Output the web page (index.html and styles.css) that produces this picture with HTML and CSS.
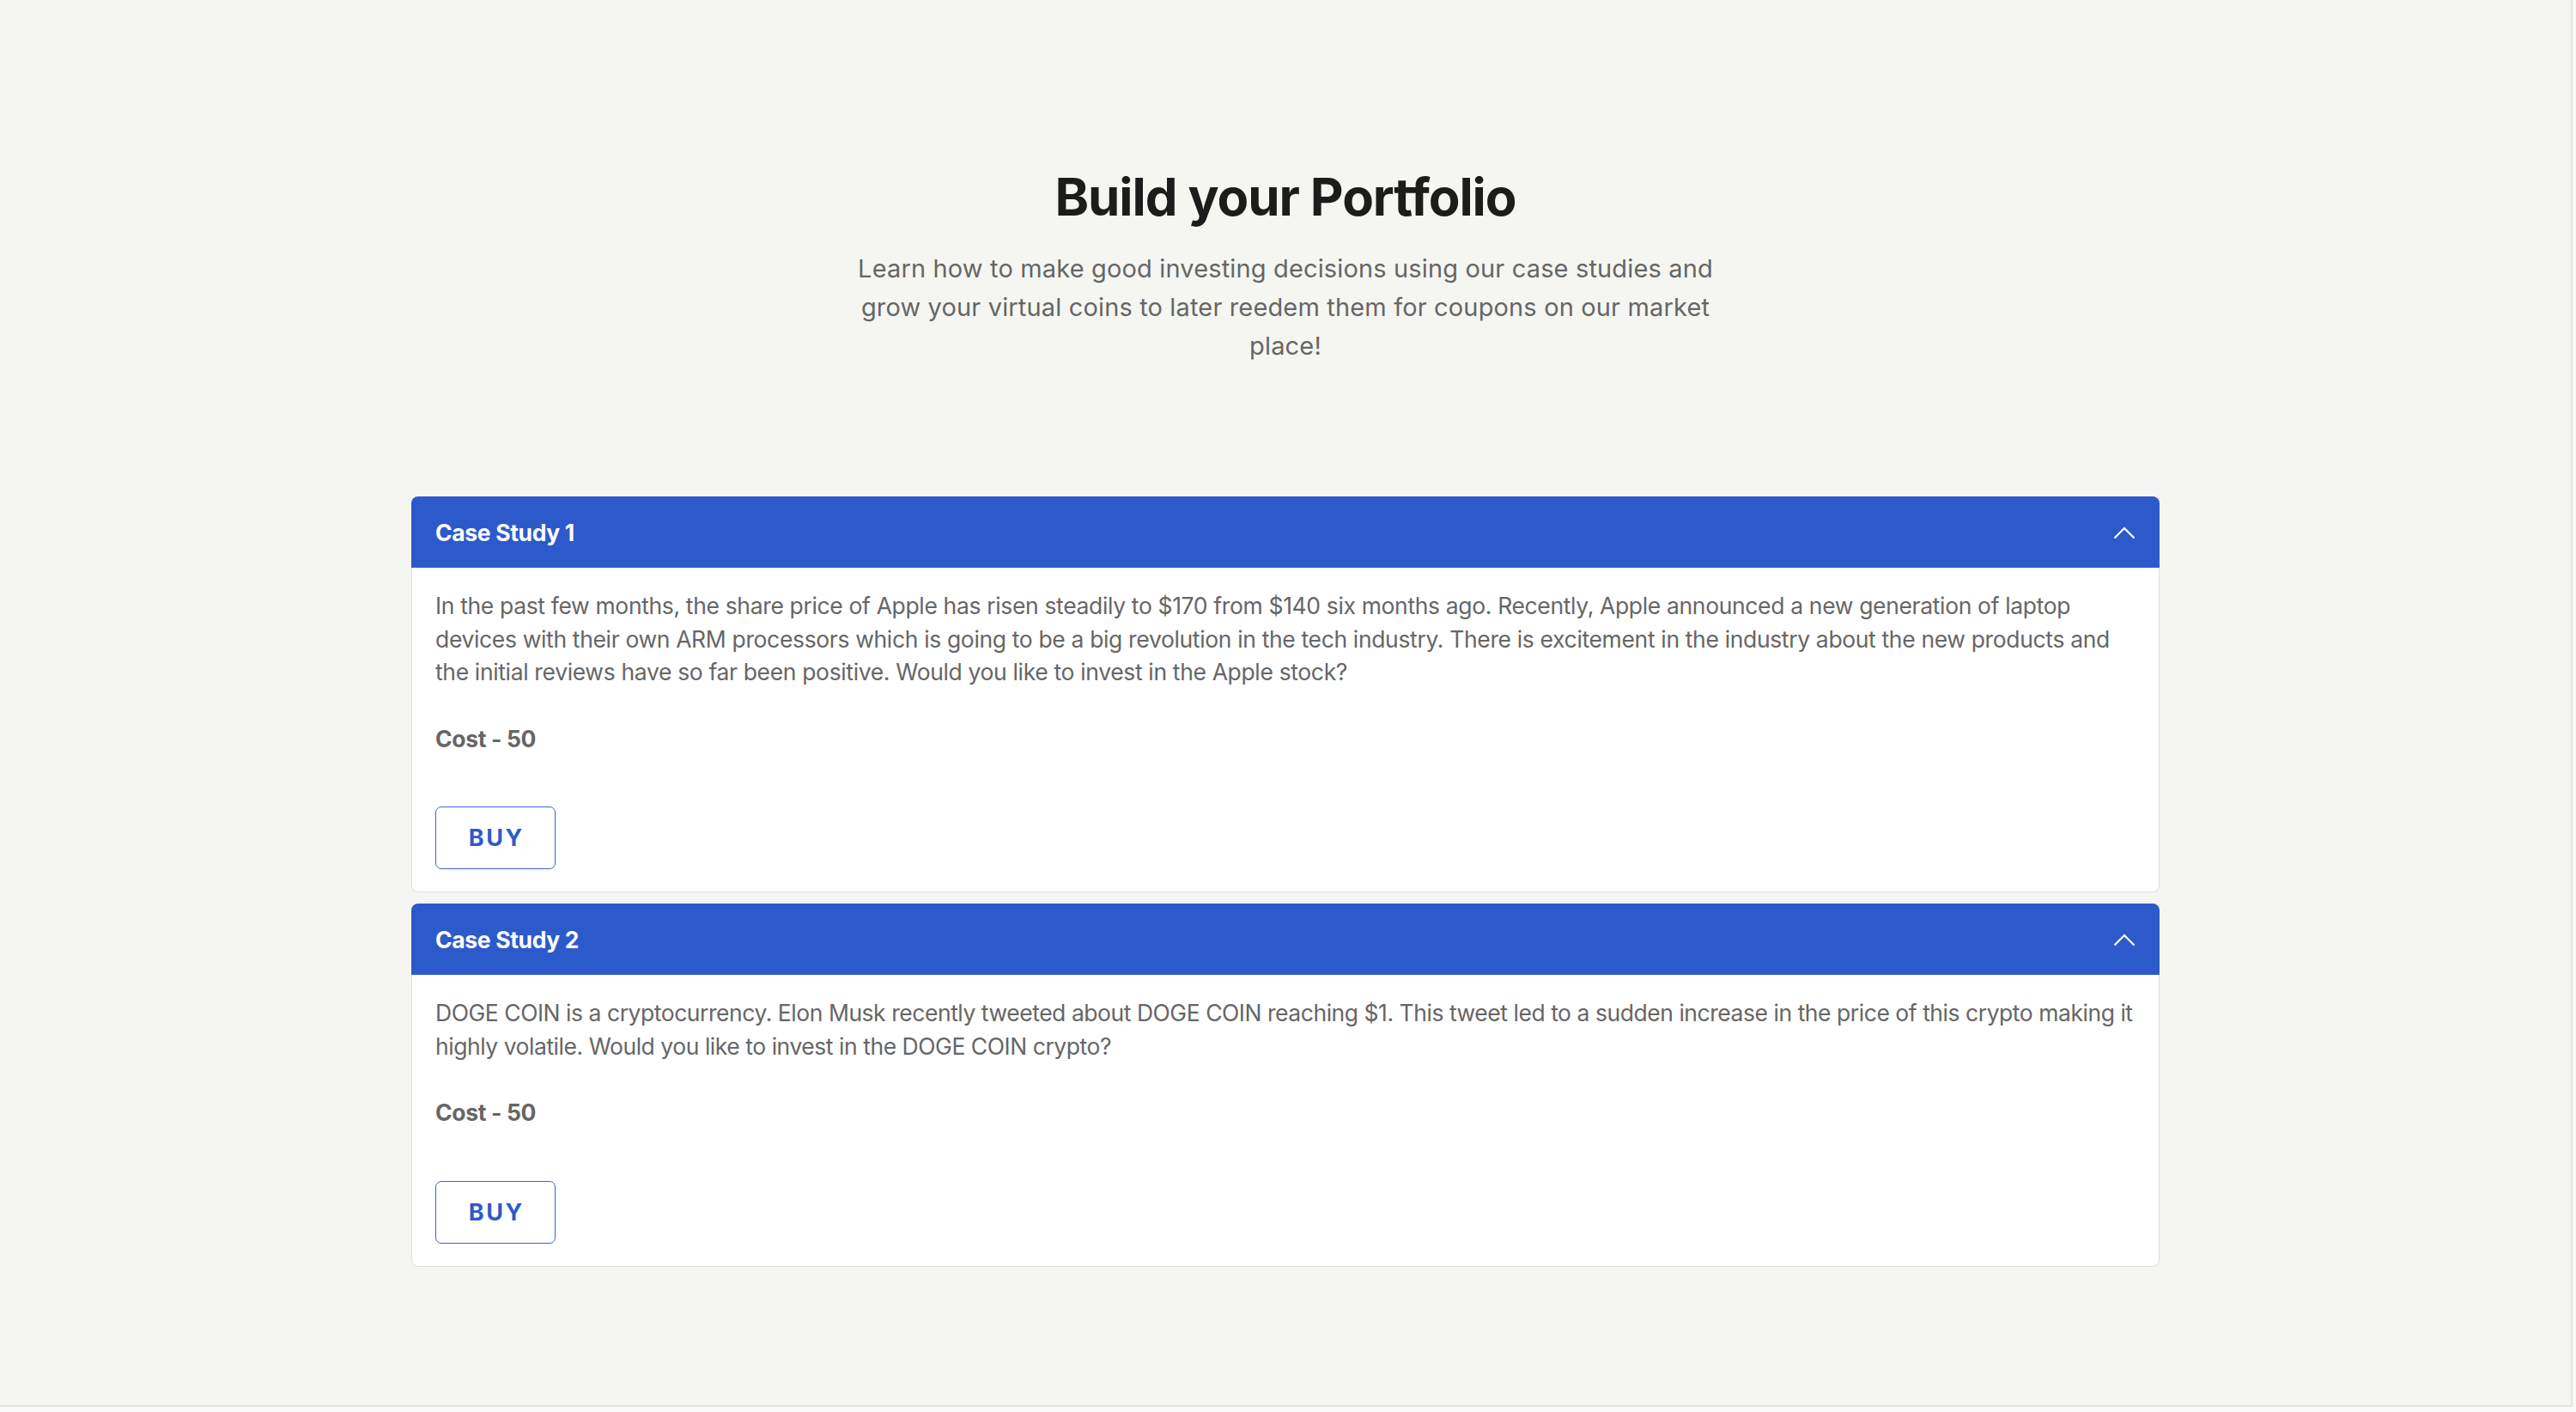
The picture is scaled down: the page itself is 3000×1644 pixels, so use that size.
FILE: index.html
```html
<!DOCTYPE html>
<html lang="en">
<head>
<meta charset="utf-8">
<title>Build your Portfolio</title>
<link rel="stylesheet" href="styles.css">
</head>
<body>
<div class="page">
  <header class="intro">
    <h1 class="title">Build your Portfolio</h1>
    <p class="subtitle">Learn how to make good investing decisions using our case studies and grow your virtual coins to later reedem them for coupons on our market place!</p>
  </header>
  <section class="cases">
    <article class="case">
      <div class="case-head">
        <span class="case-title">Case Study 1</span>
        <svg class="chev" width="26" height="15" viewBox="0 0 26 15"><polyline points="1.5,13.5 13,2 24.5,13.5" fill="none" stroke="#ffffff" stroke-width="2.2"/></svg>
      </div>
      <div class="case-body">
        <p class="case-text">In the past few months, the share price of Apple has risen steadily to $170 from $140 six months ago. Recently, Apple announced a new generation of laptop devices with their own ARM processors which is going to be a big revolution in the tech industry. There is excitement in the industry about the new products and the initial reviews have so far been positive. Would you like to invest in the Apple stock?</p>
        <p class="cost">Cost - 50</p>
        <button class="buy">BUY</button>
      </div>
    </article>
    <article class="case">
      <div class="case-head">
        <span class="case-title">Case Study 2</span>
        <svg class="chev" width="26" height="15" viewBox="0 0 26 15"><polyline points="1.5,13.5 13,2 24.5,13.5" fill="none" stroke="#ffffff" stroke-width="2.2"/></svg>
      </div>
      <div class="case-body">
        <p class="case-text case-text--tight">DOGE COIN is a cryptocurrency. Elon Musk recently tweeted about DOGE COIN reaching $1. This tweet led to a sudden increase in the price of this crypto making it highly volatile. Would you like to invest in the DOGE COIN crypto?</p>
        <p class="cost">Cost - 50</p>
        <button class="buy">BUY</button>
      </div>
    </article>
  </section>
</div>
</body>
</html>
```

FILE: styles.css
```css
html, body {
  margin: 0;
  padding: 0;
}
body {
  background: #f9f9f9;
  font-family: Inter, "Noto Sans", "Liberation Sans", sans-serif;
  width: 3000px;
  height: 1644px;
  overflow: hidden;
}
.page {
  box-sizing: border-box;
  width: 2996px;
  height: 1638px;
  background: #f5f6f2;
  border-right: 2px solid #e3e3e3;
  border-bottom: 2px solid #e3e3e3;
  padding-top: 193px;
  display: flex;
  flex-direction: column;
  align-items: center;
}
.intro {
  display: flex;
  flex-direction: column;
  align-items: center;
  text-align: center;
}
.title {
  margin: 0;
  font-size: 60px;
  line-height: 72px;
  font-weight: 700;
  color: #1c1c1c;
  letter-spacing: -1.1px;
}
.subtitle {
  margin: 25px 0 0;
  width: 1020px;
  font-size: 29px;
  line-height: 45px;
  color: #666666;
  letter-spacing: 0.15px;
}
.cases {
  margin-top: 153px;
  width: 2036px;
  display: flex;
  flex-direction: column;
  gap: 13px;
}
.case {
  display: flex;
  flex-direction: column;
}
.case-head {
  height: 83px;
  box-sizing: border-box;
  padding: 0 28px;
  background: #2d5acb;
  border-radius: 8px 8px 0 0;
  display: flex;
  align-items: center;
  justify-content: space-between;
}
.case-title {
  color: #ffffff;
  font-size: 26.5px;
  font-weight: 700;
  letter-spacing: -0.35px;
}
.chev {
  display: block;
  margin-top: 1px;
}
.case-body {
  background: #ffffff;
  border: 1px solid #dedede;
  border-top: none;
  border-radius: 0 0 8px 8px;
  padding: 25px 27px 26px;
  display: flex;
  flex-direction: column;
  align-items: flex-start;
}
.case-text {
  margin: 0;
  font-size: 26.5px;
  line-height: 38.5px;
  color: #666666;
  letter-spacing: -0.35px;
}
.case-text--tight {
  letter-spacing: -0.46px;
}
.cost {
  margin: 39px 0 0;
  font-size: 26.5px;
  line-height: 38.5px;
  font-weight: 700;
  color: #666666;
  letter-spacing: -0.35px;
}
.buy {
  margin-top: 60px;
  box-sizing: border-box;
  width: 140px;
  height: 73px;
  background: #ffffff;
  border: 1.5px solid #3a64d2;
  border-radius: 7px;
  color: #2d5acb;
  font-family: Inter, "Noto Sans", "Liberation Sans", sans-serif;
  font-size: 27px;
  font-weight: 700;
  letter-spacing: 2.5px;
  padding: 0 0 0 2.5px;
  cursor: pointer;
}
```
